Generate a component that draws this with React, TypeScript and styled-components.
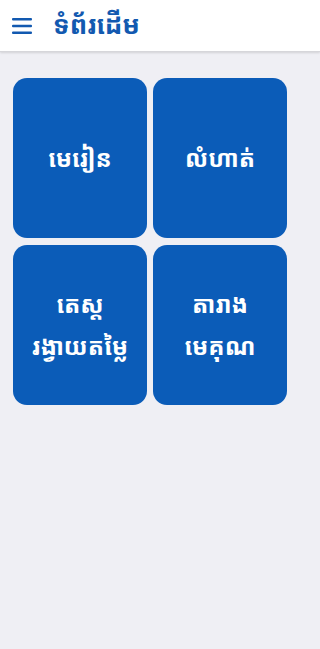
import styled, { createGlobalStyle } from 'styled-components'

const GlobalStyle = createGlobalStyle`
  html, body {
    margin: 0;
    padding: 0;
    background: #efeff4;
  }
  body {
    font-family: "Noto Sans Khmer", "Khmer OS", "Noto Sans", "DejaVu Sans", sans-serif;
  }
`

const menuItems = [
  { id: 'lesson', lines: ['មេរៀន'] },
  { id: 'exercise', lines: ['លំហាត់'] },
  { id: 'test', lines: ['តេស្ត', 'រង្វាយតម្លៃ'] },
  { id: 'table', lines: ['តារាង', 'មេគុណ'] },
]

export default function App() {
  return (
    <>
      <GlobalStyle />
      <Page>
        <TopBar>
          <MenuButton aria-label="menu">
            <svg width="20" height="16" viewBox="0 0 20 16">
              <rect x="0" y="0" width="20" height="2.4" rx="1" fill="#1259b0" />
              <rect x="0" y="6.8" width="20" height="2.4" rx="1" fill="#1259b0" />
              <rect x="0" y="13.6" width="20" height="2.4" rx="1" fill="#1259b0" />
            </svg>
          </MenuButton>
          <Title>ទំព័រដើម</Title>
        </TopBar>
        <Grid>
          {menuItems.map(({ id, lines }) => (
            <Tile key={id}>
              {lines.map((line) => (
                <TileLine key={line}>{line}</TileLine>
              ))}
            </Tile>
          ))}
        </Grid>
      </Page>
    </>
  )
}

const Page = styled('div')`
  width: 100%;
  min-height: 649px;
  background: #efeff4;
`

const TopBar = styled('header')`
  height: 51px;
  display: flex;
  align-items: center;
  gap: 21px;
  padding: 0 0 0 12px;
  background: #ffffff;
  border-bottom: 1px solid #d6d6da;
  box-shadow: 0 1px 2px rgba(0, 0, 0, 0.12);
`

const MenuButton = styled('button')`
  display: flex;
  align-items: center;
  padding: 0;
  border: 0;
  background: none;
  margin-top: 1px;
`

const Title = styled('h1')`
  margin: 0 0 4px;
  font-size: 26px;
  font-weight: 700;
  color: #1259b0;
`

const Grid = styled('main')`
  display: grid;
  grid-template-columns: 134px 134px;
  grid-auto-rows: 160px;
  gap: 7px 6px;
  padding: 26px 13px 0;
`

const Tile = styled('div')`
  display: flex;
  flex-direction: column;
  align-items: center;
  justify-content: center;
  background: #0b5cb8;
  border-radius: 14px;
  color: #ffffff;
`

const TileLine = styled('div')`
  font-size: 24px;
  font-weight: 700;
  line-height: 42px;
`
